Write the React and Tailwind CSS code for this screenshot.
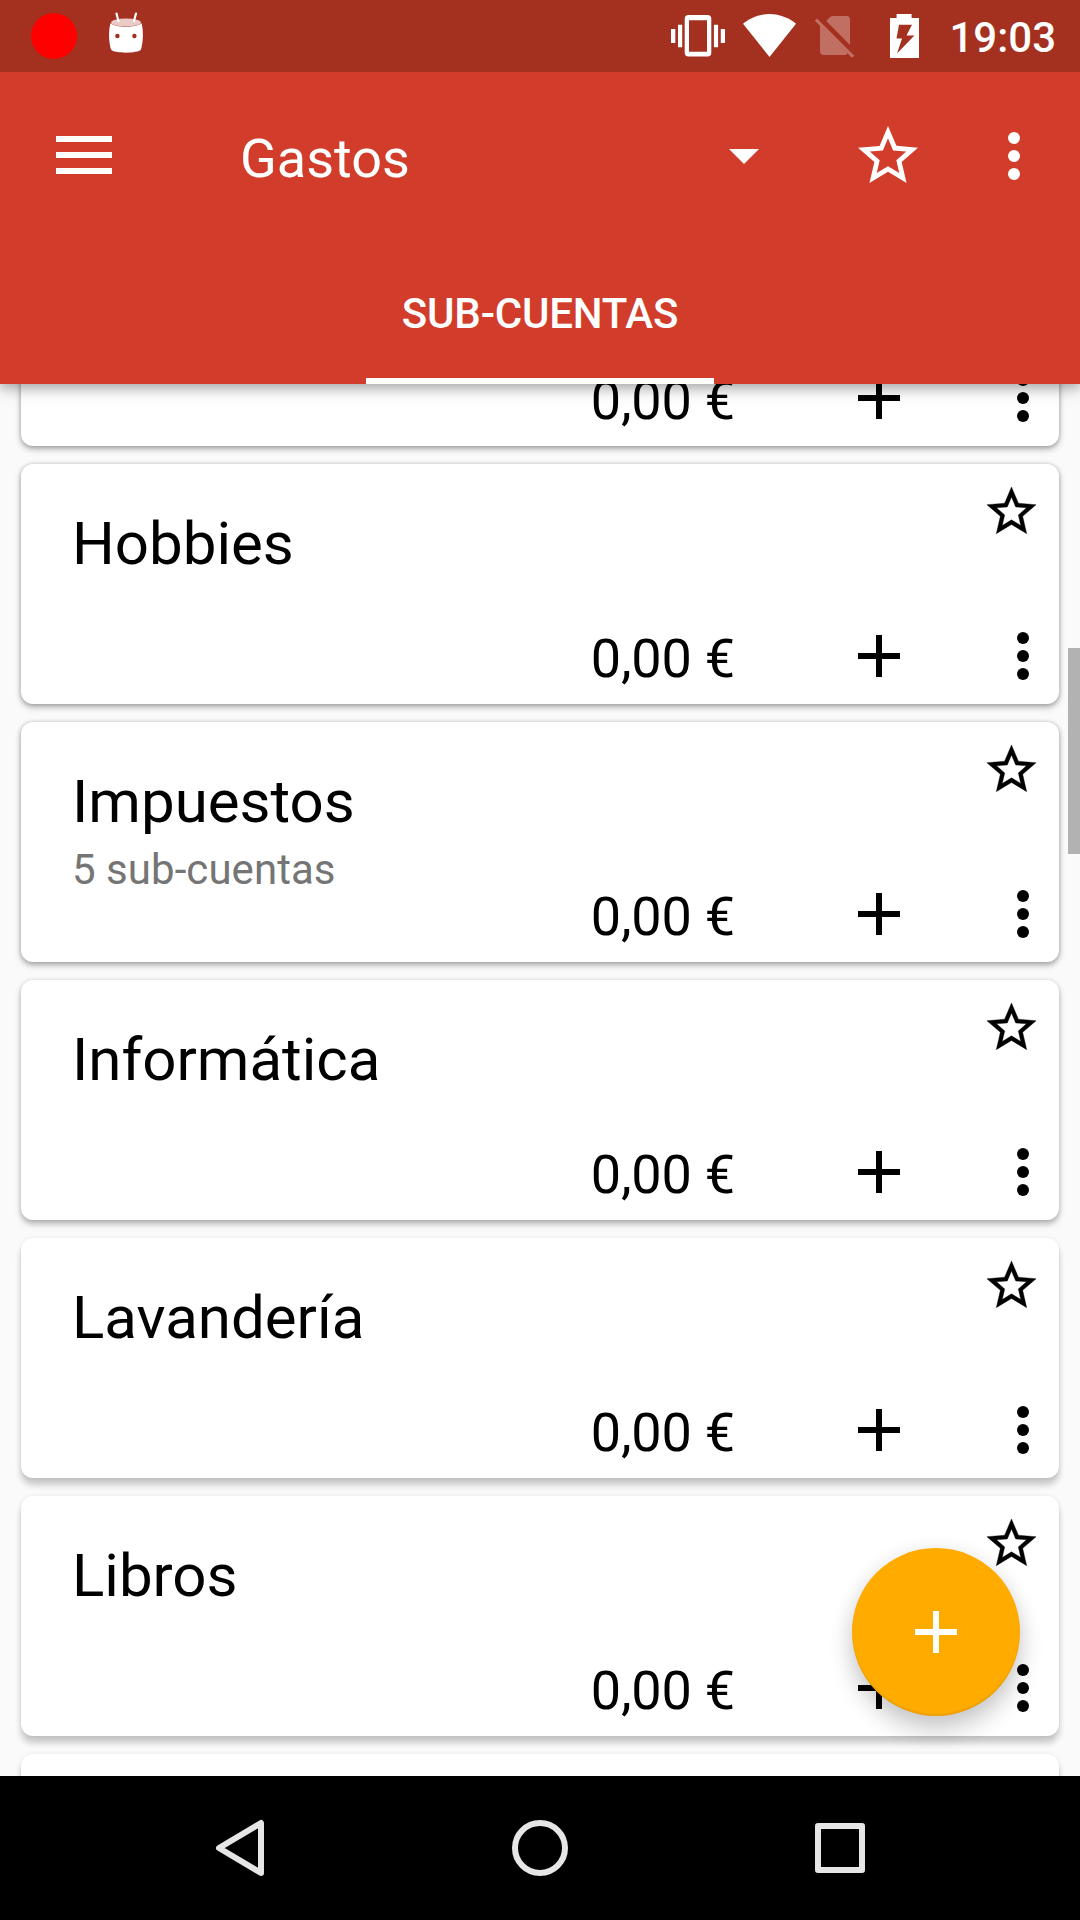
import React from "react";

const STAR =
  "M22 9.24l-7.19-.62L12 2 9.19 8.63 2 9.24l5.46 4.73L5.82 21 12 17.27 18.18 21l-1.63-7.03L22 9.24zM12 15.4l-3.76 2.27 1-4.28-3.32-2.88 4.38-.38L12 6.1l1.71 4.04 4.38.38-3.32 2.88 1 4.28L12 15.4z";

const NEAR = "shadow-[0_3px_6px_rgba(0,0,0,0.32),0_0_4px_rgba(0,0,0,0.16)]";
const MID = "shadow-[0_4px_6px_rgba(0,0,0,0.28),0_0_4px_rgba(0,0,0,0.12)]";
const FAR = "shadow-[0_7px_6px_rgba(0,0,0,0.20),0_0_4px_rgba(0,0,0,0.08)]";

const accounts = [
  { name: "", sub: "", shadow: NEAR },
  { name: "Hobbies", sub: "", shadow: NEAR },
  { name: "Impuestos", sub: "5 sub-cuentas", shadow: NEAR },
  { name: "Informática", sub: "", shadow: MID },
  { name: "Lavandería", sub: "", shadow: FAR },
  { name: "Libros", sub: "", shadow: FAR },
];

function Star({ className }) {
  return (
    <svg viewBox="0 0 24 24" className={className} fill="currentColor">
      <path d={STAR} />
    </svg>
  );
}

function Dots() {
  return (
    <svg viewBox="0 0 72 72" className="h-[72px] w-[72px] shrink-0" fill="currentColor">
      <circle cx="36" cy="18" r="6" />
      <circle cx="36" cy="36" r="6" />
      <circle cx="36" cy="54" r="6" />
    </svg>
  );
}

function Plus() {
  return (
    <svg viewBox="0 0 72 72" className="h-[72px] w-[72px] shrink-0" fill="currentColor">
      <path d="M33 15h6v18h18v6H39v18h-6V39H15v-6h18z" />
    </svg>
  );
}

function StatusBar() {
  return (
    <div className="relative z-20 flex h-[72px] shrink-0 items-center bg-[#a43020] text-white">
      <div className="ml-[31px] h-[46px] w-[46px] rounded-full bg-[#ff0000]" />
      <svg viewBox="0 0 72 72" className="ml-[13px] h-[72px] w-[72px]">
        <path d="M20.6 23C25 28 47 28 51.400 23C53.400 29 53.600 41 51 49.500C48 53.700 24 53.700 21 49.500C18.400 41 18.600 29 20.600 23z" fill="#fff" />
        <ellipse cx="36" cy="22.500" rx="15" ry="4" fill="#e9cac6" />
        <path d="M26.500 13.500L28.400 21M46 13.500L44 21" stroke="#fff" strokeWidth="2.200" strokeLinecap="round" />
        <circle cx="27.400" cy="36" r="2.200" fill="#a43020" />
        <circle cx="44.400" cy="36" r="2.200" fill="#a43020" />
      </svg>
      <svg viewBox="0 0 60 72" className="ml-auto h-[72px] w-[60px]" fill="#fff">
        <path fillRule="evenodd" d="M20.500 15h19a3.800 3.800 0 0 1 3.800 3.800v34a3.800 3.800 0 0 1-3.800 3.800h-19a3.800 3.800 0 0 1-3.800-3.800v-34a3.800 3.800 0 0 1 3.800-3.800zM21 20.300V51.700H39V20.300z" />
        <path d="M10 24.800h4.200v22.500H10zM3 29h4.300v14H3zM45.900 24.800h4.200v22.500h-4.200zM52.800 29h4.200v14h-4.200z" />
      </svg>
      <svg viewBox="0 0 66 72" className="ml-[8px] h-[72px] w-[66px]" fill="#fff">
        <path d="M7 23.700C13 18.500 23 14 33.500 14S54 18.500 60 23.700L33.500 57z" />
      </svg>
      <svg viewBox="0 0 60 72" className="ml-[3px] h-[72px] w-[60px]" fill="#c26f63">
        <path d="M21.200 21L25.500 16.700Q26.500 16 28 16H41.500Q45 16 45 19.500V45zM15 24.500L42.500 53Q42 55 39.500 55H19Q15 55 15 51z" />
        <path d="M9.800 20.700L12 18.600 49.300 55.700 47 57.800z" />
      </svg>
      <svg viewBox="0 0 48 72" className="ml-[15px] h-[72px] w-[48px]" fill="#fff">
        <path fillRule="evenodd" d="M16.600 14h15v4h7.400v40H10V18h6.600zM19 24.700L16.500 38.500H22L17 53.500 34.400 35.500H26.500L32 24.700z" />
      </svg>
      <span className="mr-[24px] ml-[21px] pt-[3px] text-[42px] leading-[72px] font-medium">19:03</span>
    </div>
  );
}

function Header() {
  return (
    <div className="relative z-10 h-[312px] shrink-0 bg-[#d13d2a] text-white shadow-[0_4px_12px_rgba(0,0,0,0.30),0_2px_24px_rgba(0,0,0,0.10)]">
      <div className="flex h-[168px] items-center">
        <div className="ml-[56px] flex h-[38px] w-[56px] -translate-y-px flex-col justify-between">
          <div className="h-[6px] bg-white" />
          <div className="h-[6px] bg-white" />
          <div className="h-[6px] bg-white" />
        </div>
        <span className="ml-[128px] w-[468px] pt-[5px] text-[54px] leading-[72px]">Gastos</span>
        <svg viewBox="0 0 24 24" className="h-[72px] w-[72px] translate-y-[-1px]" fill="currentColor">
          <path d="M7 10l5 5 5-5z" />
        </svg>
        <Star className="ml-[72px] h-[72px] w-[72px]" />
        <div className="ml-[54px]">
          <Dots />
        </div>
      </div>
      <div className="mx-auto flex h-[144px] w-[348px] flex-col items-center border-b-[6px] border-white">
        <span className="pt-[42px] text-[42px] leading-[64px] font-medium tracking-[-0.2px] whitespace-nowrap">SUB-CUENTAS</span>
      </div>
    </div>
  );
}

function Card({ name, sub, shadow }) {
  return (
    <div className={`flex h-[240px] shrink-0 flex-col rounded-[12px] bg-white text-black ${shadow}`}>
      <div className="flex h-[156px] justify-between pr-[18.5px] pl-[51px]">
        <div className="pt-[44px]">
          <div className="h-[72px] text-[60px] leading-[72px]">{name}</div>
          <div className="pt-[8px] text-[42px] leading-[48px] tracking-[0.05px] text-[#757575]">{sub}</div>
        </div>
        <Star className="mt-[18px] h-[59px] w-[59px] stroke-current stroke-[0.15]" />
      </div>
      <div className="flex h-[72px] items-center">
        <span className="ml-auto pt-[6px] text-[54px] leading-[72px] tracking-[-0.2px]">0,00&nbsp;€</span>
        <div className="ml-[108px]">
          <Plus />
        </div>
        <div className="ml-[72px]">
          <Dots />
        </div>
      </div>
    </div>
  );
}

export default function App() {
  return (
    <div className="flex h-[1920px] w-[1080px] flex-col overflow-hidden bg-[#fafafa] font-['Roboto',sans-serif]">
      <StatusBar />
      <Header />
      <div className="relative h-[1392px] shrink-0 overflow-hidden">
        <div className="-mt-[178px] flex flex-col gap-[18px] px-[21px]">
          {accounts.map((a, i) => (
            <Card key={i} {...a} />
          ))}
          <div className={`h-[240px] shrink-0 rounded-[12px] bg-white ${FAR}`} />
        </div>
        <div className="absolute top-[264px] right-0 h-[206px] w-[12px] bg-[#b2b2b2]" />
        <div className="absolute right-[60px] bottom-[60px] flex h-[168px] w-[168px] items-center justify-center rounded-full bg-[#ffab00] text-white shadow-[0_14px_24px_rgba(0,0,0,0.20),0_0_20px_rgba(0,0,0,0.06),inset_0_-2px_2px_rgba(0,0,0,0.08)]">
          <Plus />
        </div>
      </div>
      <div className="flex h-[144px] shrink-0 items-center justify-center gap-[228px] bg-black">
        <svg viewBox="0 0 72 72" className="h-[72px] w-[72px]" fill="none" stroke="#e6e6e6" strokeWidth="6" strokeLinejoin="round">
          <path d="M57 11V61L15 36z" />
        </svg>
        <svg viewBox="0 0 72 72" className="h-[72px] w-[72px]" fill="none" stroke="#e6e6e6" strokeWidth="6">
          <circle cx="36" cy="36" r="25" />
        </svg>
        <svg viewBox="0 0 72 72" className="h-[72px] w-[72px]" fill="none" stroke="#e6e6e6" strokeWidth="6" strokeLinejoin="round">
          <path d="M14 14H58V58H14z" />
        </svg>
      </div>
    </div>
  );
}
